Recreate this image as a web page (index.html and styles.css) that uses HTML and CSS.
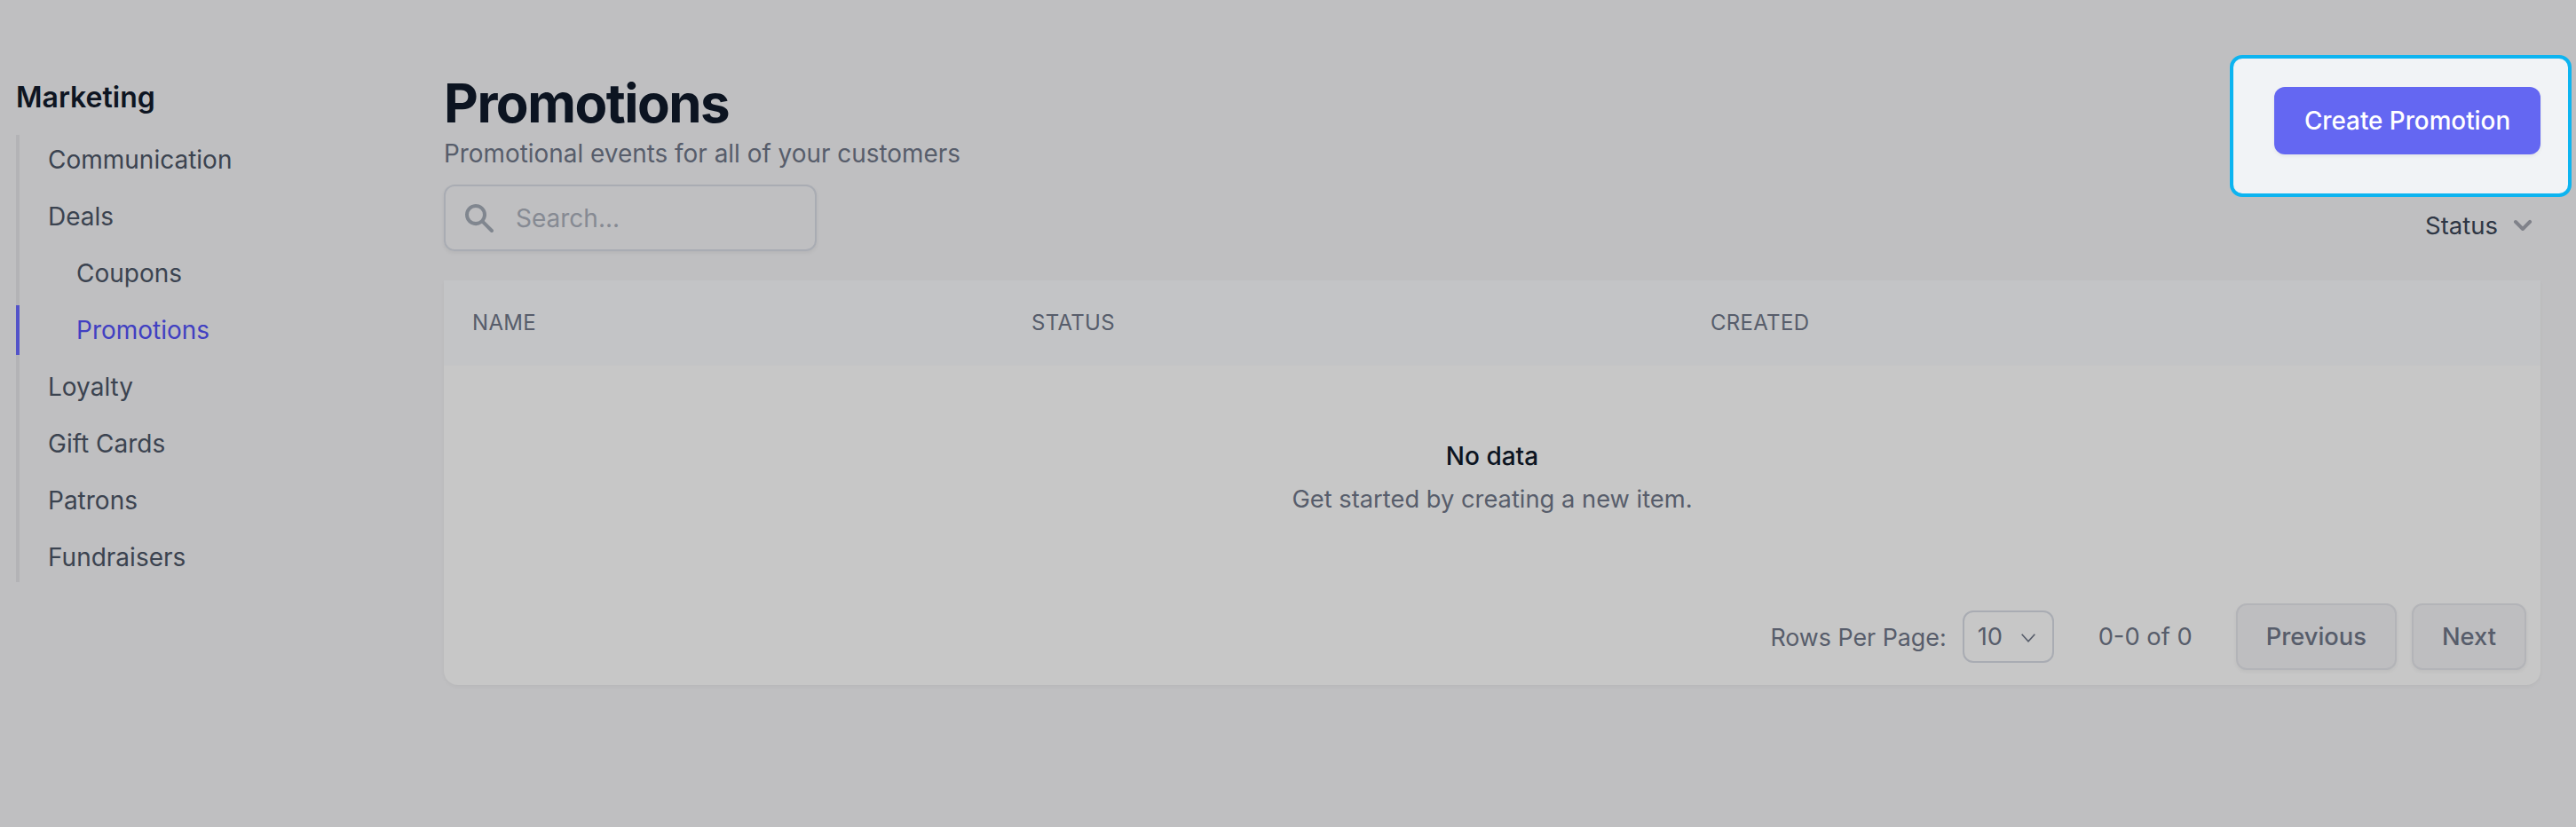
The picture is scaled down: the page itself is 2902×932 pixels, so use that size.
FILE: index.html
```html
<!DOCTYPE html>
<html lang="en">
<head>
<meta charset="utf-8">
<title>Promotions</title>
<link rel="stylesheet" href="styles.css">
</head>
<body>
<div class="page">
  <aside class="sidebar">
    <h2 class="side-title">Marketing</h2>
    <nav class="side-nav">
      <a class="side-link">Communication</a>
      <a class="side-link">Deals</a>
      <a class="side-link sub">Coupons</a>
      <a class="side-link sub active">Promotions</a>
      <a class="side-link">Loyalty</a>
      <a class="side-link">Gift Cards</a>
      <a class="side-link">Patrons</a>
      <a class="side-link">Fundraisers</a>
    </nav>
  </aside>
  <main class="main">
    <header class="head">
      <div class="head-left">
        <h1 class="title">Promotions</h1>
        <p class="subtitle">Promotional events for all of your customers</p>
        <label class="search">
          <svg class="search-icon" viewBox="0 0 20 20" fill="currentColor"><path fill-rule="evenodd" clip-rule="evenodd" d="M8 4a4 4 0 100 8 4 4 0 000-8zM2 8a6 6 0 1110.89 3.476l4.817 4.817a1 1 0 01-1.414 1.414l-4.816-4.816A6 6 0 012 8z"/></svg>
          <input class="search-input" type="text" placeholder="Search...">
        </label>
      </div>
      <div class="head-right">
        <div class="spotlight">
          <button class="primary">Create Promotion</button>
        </div>
        <div class="status-filter">
          <span>Status</span>
          <svg class="status-chevron" viewBox="0 0 20 20" fill="currentColor"><path fill-rule="evenodd" clip-rule="evenodd" d="M5.293 7.293a1 1 0 011.414 0L10 10.586l3.293-3.293a1 1 0 111.414 1.414l-4 4a1 1 0 01-1.414 0l-4-4a1 1 0 010-1.414z"/></svg>
        </div>
      </div>
    </header>
    <section class="table">
      <div class="thead">
        <div class="th">Name</div>
        <div class="th">Status</div>
        <div class="th">Created</div>
      </div>
      <div class="empty">
        <div class="empty-title">No data</div>
        <div class="empty-text">Get started by creating a new item.</div>
      </div>
      <div class="pager">
        <span class="rows-label">Rows Per Page:</span>
        <div class="rows-select">
          <span>10</span>
          <svg class="rows-chevron" viewBox="0 0 16 16" fill="none" stroke="currentColor" stroke-width="1"><path d="M3.5 6l4.5 5 4.5-5"/></svg>
        </div>
        <span class="range">0-0 of 0</span>
        <button class="page-btn prev">Previous</button>
        <button class="page-btn">Next</button>
      </div>
    </section>
  </main>
</div>
</body>
</html>
```
FILE: styles.css
```css
* { box-sizing: border-box; }
html, body { margin: 0; height: 100%; }
body {
  background: #bfbfc1;
  font-family: Inter, "Liberation Sans", sans-serif;
  font-size: 28px;
  color: #3b4350;
}
.page { display: flex; min-height: 932px; }

.sidebar { width: 500px; flex: none; padding: 86px 0 0 18px; }
.side-title { margin: 0 0 18px; font-size: 32px; line-height: 48px; font-weight: 600; color: #0e1522; }
.side-nav { display: flex; flex-direction: column; gap: 8px; width: fit-content; min-width: 300px; position: relative; }
.side-nav::before { content: ""; position: absolute; left: 0; top: 0; bottom: 0; width: 4px; background: #b3b3b6; }
.side-link { position: relative; height: 56px; display: flex; align-items: center; padding-left: 36px; line-height: 40px; }
.side-link.sub { padding-left: 68px; }
.side-link.active { color: #4140c2; }
.side-link.active::before { content: ""; position: absolute; left: 0; top: 0; bottom: 0; width: 4px; background: #5353c9; }

.main { flex: 1; min-width: 0; padding: 62px 40px 0 0; }
.head { display: flex; justify-content: space-between; align-items: flex-start; }
.head-left { padding-top: 18px; }
.title { margin: 0; font-size: 60px; line-height: 72px; font-weight: 700; letter-spacing: -1.5px; color: #0c1421; }
.subtitle { margin: 1px 0 0; font-size: 27.9px; line-height: 40px; color: #575d6b; }
.search {
  margin-top: 15px; width: 420px; height: 75px; display: flex; align-items: center;
  padding-left: 18px; gap: 21px;
  border: 2px solid #a9acb3; border-radius: 12px;
  box-shadow: 0 2px 4px rgba(0, 0, 0, .06); color: #80868f;
}
.search-icon { width: 40px; height: 40px; flex: none; }
.search-input { flex: 1; min-width: 0; border: 0; outline: 0; padding: 0; background: transparent; font: inherit; color: inherit; }
.search-input::placeholder { color: #868a93; opacity: 1; }

.head-right { display: flex; flex-direction: column; align-items: flex-end; }
.spotlight {
  margin-right: -35px; width: 385px; height: 160px; padding: 32px 31px 0 46px;
  background: #f1f3f6; border: 4px solid #0db4f0; border-radius: 14px;
}
.primary {
  display: block; width: 300px; height: 76px; padding: 0;
  border: 0; border-radius: 12px; background: #6467f2; color: #fff;
  font: 500 27.8px/40px Inter, "Liberation Sans", sans-serif;
  box-shadow: 0 2px 4px rgba(0, 0, 0, .06);
}
.status-filter { margin-top: 12px; height: 40px; display: flex; align-items: center; gap: 8px; font-size: 27.5px; color: #2e3644; }
.status-chevron { width: 40px; height: 40px; color: #80828a; }

.table { margin-top: 33px; background: #c7c7c7; border-radius: 0 0 16px 16px; box-shadow: 0 2px 4px rgba(0, 0, 0, .04); }
.thead { display: grid; grid-template-columns: 630px 765px 1fr; height: 96px; align-items: center; padding-left: 32px; background: #c3c4c6; }
.th { font-size: 24px; line-height: 32px; font-weight: 400; text-transform: uppercase; letter-spacing: .3px; color: #575d6b; }
.empty { padding-top: 82px; text-align: center; }
.empty-title { font-size: 28px; line-height: 40px; font-weight: 500; color: #0c1421; }
.empty-text { margin-top: 9px; font-size: 27.3px; line-height: 40px; color: #575d6b; }
.pager { margin-top: 97px; padding: 0 16px 17px 0; display: flex; justify-content: flex-end; align-items: center; font-size: 27.3px; color: #575d6b; }
.rows-label { font-size: 26.8px; }
.rows-select {
  margin-left: 18px; width: 103px; height: 59px; display: flex; align-items: center; justify-content: space-between;
  padding: 0 14px 0 15px; border: 2px solid #a9acb3; border-radius: 12px;
}
.rows-chevron { width: 26px; height: 26px; }
.range { margin-left: 50px; }
.page-btn {
  height: 75px; padding: 0 32px; background: #bebec0;
  border: 2px solid #b3b4b8; border-radius: 12px; color: #575d6b;
  font: 500 27.3px/40px Inter, "Liberation Sans", sans-serif;
  box-shadow: 0 2px 4px rgba(0, 0, 0, .05);
  margin-left: 17px;
}
.page-btn.prev { margin-left: 49px; }
```
